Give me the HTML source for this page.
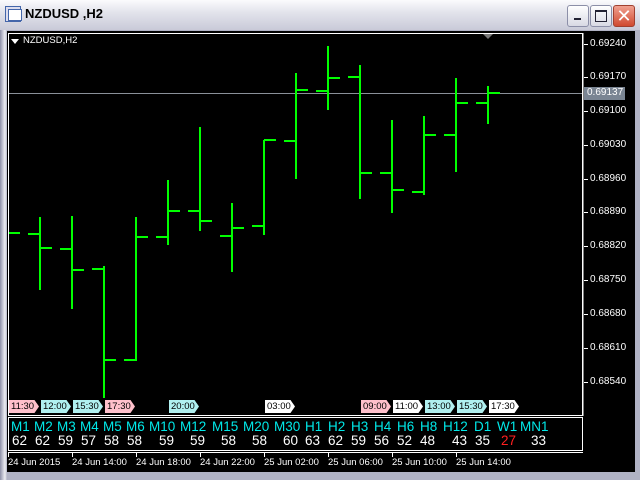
<!DOCTYPE html>
<html><head><meta charset="utf-8"><style>
body{margin:0;width:640px;height:480px;overflow:hidden;background:#d4d0c8;font-family:"Liberation Sans",sans-serif;position:relative}
.a{position:absolute}
.title{left:0;top:0;width:640px;height:30px;background:linear-gradient(#fbfbfd,#e3e4ec 40%,#c9cad8);border-bottom:1px solid #9a9cb0}
.frame{left:0;top:30px;width:640px;height:450px;background:linear-gradient(90deg,#8c8ea6,#c8c9d6 3px,#eeeef2 5px,#b0b2c4 7px)}
.blk{left:7px;top:31px;width:628px;height:441px;background:#000}
.btn{top:5px;width:20px;height:20px;border:1px solid #8c8fa8;border-radius:3px;background:linear-gradient(#fff,#d8d9e4)}
.s{font-size:10px;color:#fff;white-space:nowrap}
.tag{font-size:9.5px;color:#000;height:13px;line-height:13px;padding-left:2px;top:400px;width:28px;clip-path:polygon(0 0,85% 0,100% 50%,85% 100%,0 100%)}
.lbl{font-size:13.5px;color:#00e8e8;top:419px}
.num{font-size:13.5px;color:#fff;top:433px}
</style></head><body>
<div class="a title"></div>
<div class="a" style="left:5px;top:6px;width:14px;height:14px;background:#dde;border:1px solid #46a;"></div>
<div class="a" style="left:8px;top:9px;width:12px;height:10px;background:#fff;border:1px solid #46a;"></div>
<div class="a" style="left:25px;top:6px;font-size:13px;font-weight:bold;color:#000">NZDUSD ,H2</div>
<div class="a btn" style="left:567px"><div class="a" style="left:6px;top:12px;width:7px;height:2px;background:#223"></div></div>
<div class="a btn" style="left:590px"><div class="a" style="left:4px;top:4px;width:10px;height:9px;border:1px solid #223;border-top-width:2px"></div></div>
<div class="a btn" style="left:613px;background:linear-gradient(#f0a090,#d04a30);border-color:#a04030;color:#fff;font-size:18px;line-height:20px;text-align:center">✕</div>
<div class="a frame"></div>
<div class="a blk"></div>
<svg class="a" style="left:0;top:0" width="640" height="480">
<rect x="8.5" y="33.5" width="574" height="382" fill="none" stroke="#fff"/>
<rect x="8.5" y="417.5" width="574" height="33" fill="none" stroke="#fff"/>
<line x1="8" y1="452.5" x2="583" y2="452.5" stroke="#fff"/>
<line x1="583" y1="33" x2="583" y2="416" stroke="#fff"/>
<polygon points="483,34 493,34 488,39" fill="#777"/>
<polygon points="11,39 19,39 15,44" fill="#fff"/>
<line x1="9" y1="93.5" x2="582" y2="93.5" stroke="#8a9099"/>
<g stroke="#00ff00" stroke-width="2" fill="none" id="bars"></g>
<g stroke="#fff" id="ticks"></g>
</svg>
<div class="a s" style="left:23px;top:35px;font-size:9.5px">NZDUSD,H2</div>
<div class="a" style="left:584px;top:87px;width:41px;height:13px;background:#7a8593"></div>
<div id="px"></div>
<div class="a tag" style="left:9px;background:#ffc0cb">11:30</div>
<div class="a tag" style="left:41px;background:#b0f0f0">12:00</div>
<div class="a tag" style="left:73px;background:#b0f0f0">15:30</div>
<div class="a tag" style="left:105px;background:#ffc0cb">17:30</div>
<div class="a tag" style="left:169px;background:#b0f0f0">20:00</div>
<div class="a tag" style="left:265px;background:#fff">03:00</div>
<div class="a tag" style="left:361px;background:#ffc0cb">09:00</div>
<div class="a tag" style="left:393px;background:#fff">11:00</div>
<div class="a tag" style="left:425px;background:#b0f0f0">13:00</div>
<div class="a tag" style="left:457px;background:#b0f0f0">15:30</div>
<div class="a tag" style="left:489px;background:#fff">17:30</div>
<div id="pn"></div>
<script>
var b=[[40,217,290,234,248],[72,216,309,249,270],[104,266,398,269,360],[136,217,361,360,237],[168,180,245,237,211],[200,127,231,211,221],[232,203,272,236,228],[264,140,235,226,140],[296,73,179,141,90],[328,46,110,91,78],[360,65,199,77,173],[392,120,213,173,190],[424,116,195,192,135],[456,78,172,135,103],[488,86,124,103,93]];
var s='<line x1="9" y1="233" x2="20" y2="233"/>';
b.forEach(function(r){s+='<line x1="'+r[0]+'" y1="'+r[1]+'" x2="'+r[0]+'" y2="'+r[2]+'"/><line x1="'+(r[0]-12)+'" y1="'+r[3]+'" x2="'+r[0]+'" y2="'+r[3]+'"/><line x1="'+r[0]+'" y1="'+r[4]+'" x2="'+(r[0]+12)+'" y2="'+r[4]+'"/>';});
document.getElementById('bars').innerHTML=s;
var p=[["0.69240",44],["0.69170",77],["0.69100",111],["0.69030",145],["0.68960",179],["0.68890",212],["0.68820",246],["0.68750",280],["0.68680",314],["0.68610",348],["0.68540",382]];
var h='',t='';
p.forEach(function(q){h+='<div class="a s" style="left:590px;top:'+(q[1]-6)+'px">'+q[0]+'</div>';t+='<line x1="584" y1="'+(q[1]+.5)+'" x2="588" y2="'+(q[1]+.5)+'"/>';});
h+='<div class="a s" style="left:587px;top:87px">0.69137</div>';
var d=[["24 Jun 2015",8],["24 Jun 14:00",72],["24 Jun 18:00",136],["24 Jun 22:00",200],["25 Jun 02:00",264],["25 Jun 06:00",328],["25 Jun 10:00",392],["25 Jun 14:00",456]];
d.forEach(function(q){h+='<div class="a s" style="left:'+q[1]+'px;top:457px;font-size:9.5px">'+q[0]+'</div>';t+='<line x1="'+(q[1]+.5)+'" y1="453" x2="'+(q[1]+.5)+'" y2="457"/>';});
document.getElementById('px').innerHTML=h;document.getElementById('ticks').innerHTML=t;
var L=[["M1",11],["M2",34],["M3",57],["M4",80],["M5",103],["M6",126],["M10",149],["M12",180],["M15",212],["M20",243],["M30",274],["H1",305],["H2",328],["H3",351],["H4",374],["H6",397],["H8",420],["H12",443],["D1",474],["W1",497],["MN1",520]];
var N=[["62",12],["62",35],["59",58],["57",81],["58",104],["58",127],["59",159],["59",190],["58",221],["58",252],["60",283],["63",305],["62",328],["59",351],["56",374],["52",397],["48",420],["43",452],["35",475],["27",501],["33",531]];
var g='';L.forEach(function(q){g+='<div class="a lbl" style="left:'+q[1]+'px">'+q[0]+'</div>';});
N.forEach(function(q){g+='<div class="a num" style="left:'+q[1]+'px'+(q[0]=="27"?';color:#ff2020':'')+'">'+q[0]+'</div>';});
document.getElementById('pn').innerHTML=g;
</script>
</body></html>
